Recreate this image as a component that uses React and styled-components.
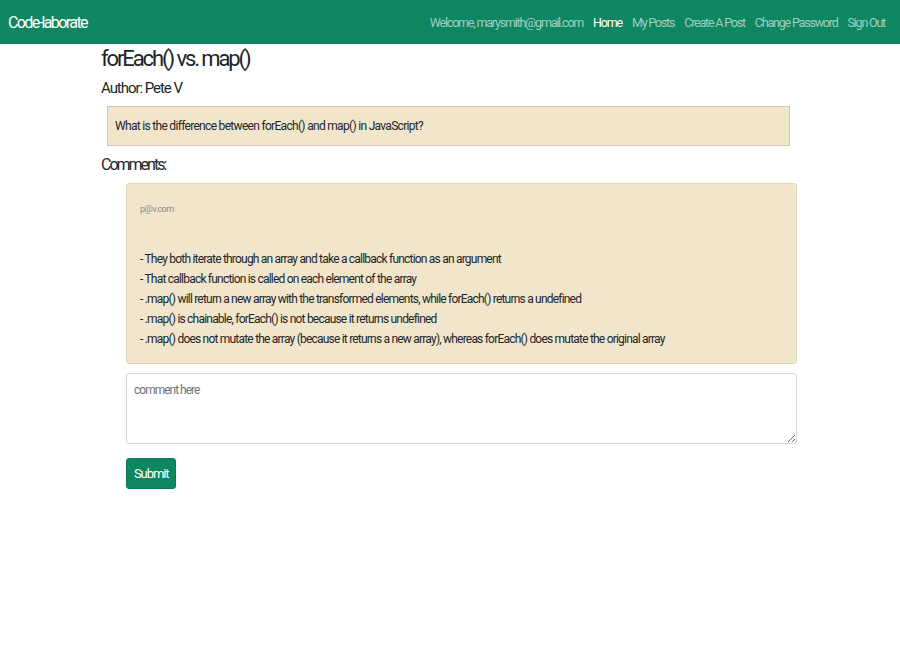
import React from 'react'
import styled, { createGlobalStyle } from 'styled-components'

const FONT = 'Roboto, "Liberation Sans", sans-serif'

const GlobalStyle = createGlobalStyle`
  * { box-sizing: border-box; }
  body {
    margin: 0;
    background: #fff;
    font-family: ${FONT};
    color: #212529;
  }
`

const Navbar = styled.nav`
  height: 44px;
  background: #0e8661;
  display: flex;
  align-items: center;
  justify-content: space-between;
  padding: 0 15px 0 8px;
`

const Brand = styled.a`
  color: #fff;
  font-size: 16px;
  letter-spacing: -1.6px;
  text-decoration: none;
`

const NavLinks = styled.div`
  display: flex;
  align-items: center;
  gap: 10px;
`

const NavLink = styled.a`
  color: ${props => (props.active ? '#fff' : 'rgba(255, 255, 255, 0.6)')};
  font-size: 12.5px;
  letter-spacing: -1.2px;
  text-decoration: none;
`

const Main = styled.main`
  width: 696px;
  margin-left: 101px;
`

const Title = styled.h1`
  margin: 0;
  font-size: 22px;
  font-weight: 400;
  letter-spacing: -2.1px;
  line-height: 30px;
`

const Author = styled.h2`
  margin: 4px 0 0;
  font-size: 15px;
  font-weight: 400;
  letter-spacing: -1.05px;
  line-height: 20px;
`

const Question = styled.div`
  margin: 8px 7px 0 6px;
  height: 40px;
  padding: 0 7px;
  display: flex;
  align-items: center;
  background: #f1e5cb;
  border: 1px solid #cfc8b8;
  font-size: 12px;
  letter-spacing: -0.69px;
`

const Heading = styled.h3`
  margin: 9px 0 0;
  font-size: 16px;
  font-weight: 400;
  letter-spacing: -2px;
  line-height: 20px;
`

const Thread = styled.div`
  margin: 8px 0 0 25px;
  width: 671px;
`

const Comment = styled.div`
  background: #f1e5cb;
  border: 1px solid #e0d6bf;
  border-radius: 3px;
  padding: 19px 13px 14px;
`

const Email = styled.div`
  font-size: 9px;
  color: #8a8a8a;
  letter-spacing: -0.5px;
  line-height: 12px;
  margin-bottom: 34px;
`

const Line = styled.div`
  font-size: 12px;
  letter-spacing: -0.79px;
  line-height: 20px;
`

const TextArea = styled.textarea`
  display: block;
  width: 100%;
  height: 71px;
  margin-top: 9px;
  padding: 9px 7px;
  border: 1px solid #d6d6d6;
  border-radius: 3px;
  font-family: ${FONT};
  font-size: 12px;
  letter-spacing: -1px;
  color: #495057;
  resize: vertical;
  &::placeholder { color: #6c757d; }
`

const Button = styled.button`
  display: block;
  margin-top: 14px;
  height: 31px;
  padding: 0 7px;
  background: #0e8661;
  border: 1px solid #0c7a58;
  border-radius: 3px;
  color: #fff;
  font-family: ${FONT};
  font-size: 13px;
  letter-spacing: -1.1px;
`

const lines = [
  '- They both iterate through an array and take a callback function as an argument',
  '- That callback function is called on each element of the array',
  '- .map() will return a new array with the transformed elements, while forEach() returns a undefined',
  '- .map() is chainable, forEach() is not because it returns undefined',
  '- .map() does not mutate the array (because it returns a new array), whereas forEach() does mutate the original array',
]

export default function App() {
  return (
    <>
      <GlobalStyle />
      <Navbar>
        <Brand href="/">Code-laborate</Brand>
        <NavLinks>
          <NavLink>Welcome, marysmith@gmail.com</NavLink>
          <NavLink active href="/">Home</NavLink>
          <NavLink href="/">My Posts</NavLink>
          <NavLink href="/">Create A Post</NavLink>
          <NavLink href="/">Change Password</NavLink>
          <NavLink href="/">Sign Out</NavLink>
        </NavLinks>
      </Navbar>
      <Main>
        <Title>forEach() vs. map()</Title>
        <Author>Author: Pete V</Author>
        <Question>What is the difference between forEach() and map() in JavaScript?</Question>
        <Heading>Comments:</Heading>
        <Thread>
          <Comment>
            <Email>p@v.com</Email>
            {lines.map(l => <Line key={l}>{l}</Line>)}
          </Comment>
          <TextArea placeholder="comment here" />
          <Button>Submit</Button>
        </Thread>
      </Main>
    </>
  )
}
